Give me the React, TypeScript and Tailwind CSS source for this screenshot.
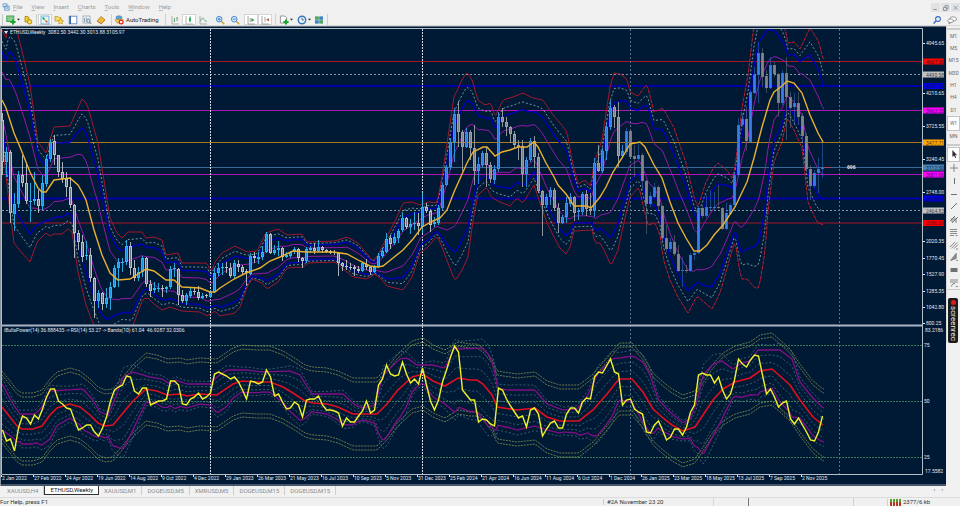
import React from "react";
import clsx from "clsx";

type Point = [number, number];

/* top, bottom, high, low, direction (1 = up) */
type Candle = [number, number, number, number, number];

const candles: Candle[] = [
	[120,162,113,175,0],[152,162,147,177,1],[152,213,150,223,0],[204,214,193,231,1],[175,204,171,208,1],
	[175,183,155,187,0],[183,201,162,204,0],[201,202,183,222,1],[199,201,172,205,1],[199,206,190,213,0],
	[183,206,175,210,1],[159,184,155,187,1],[142,159,139,162,1],[141,155,135,165,0],[155,172,155,177,0],
	[172,179,162,183,0],[179,187,172,197,0],[187,205,177,208,0],[205,233,204,258,0],[233,242,230,250,0],
	[242,257,235,262,0],[255,256,241,260,1],[255,278,248,282,0],[278,301,277,318,0],[293,301,290,308,1],
	[293,304,292,310,0],[298,304,288,308,1],[287,298,282,310,1],[268,287,265,288,1],[262,268,258,287,1],
	[262,263,258,272,1],[246,262,240,265,1],[246,268,242,275,0],[268,278,260,281,0],[272,278,267,281,1],
	[258,272,256,277,1],[258,284,257,287,0],[284,291,280,297,0],[288,290,282,293,1],[288,289,283,292,1],
	[288,289,285,297,0],[287,289,286,293,1],[269,287,266,289,1],[268,269,263,277,1],[269,295,268,305,0],
	[295,301,290,303,0],[295,301,293,305,1],[291,296,288,298,1],[291,292,288,295,0],[292,298,286,300,0],
	[296,298,293,299,1],[295,296,294,298,0],[292,297,290,298,1],[273,292,268,293,1],[268,273,263,276,1],
	[267,268,263,275,1],[267,268,262,273,0],[268,276,263,278,0],[263,276,260,278,1],[264,267,260,272,0],
	[267,272,265,275,0],[271,273,269,286,0],[256,274,253,275,1],[256,258,252,263,0],[257,259,252,264,1],
	[252,257,246,260,1],[234,252,232,253,1],[234,253,233,254,0],[250,253,245,255,1],[248,250,241,256,1],
	[248,257,247,261,0],[255,257,252,258,1],[252,256,251,258,1],[249,252,247,254,1],[249,258,248,262,0],
	[258,261,257,268,0],[249,261,247,263,1],[248,250,246,253,1],[248,251,243,254,0],[247,251,240,252,1],
	[247,250,246,253,0],[250,252,249,253,0],[251,253,250,254,0],[252,253,250,255,0],[253,263,252,276,0],
	[263,266,262,271,0],[266,267,260,270,0],[267,268,263,270,0],[267,269,265,276,0],[269,271,266,273,0],
	[263,271,262,272,1],[264,267,259,270,0],[267,272,266,275,0],[267,272,265,273,1],[256,267,253,268,1],
	[251,256,248,258,1],[239,252,233,253,1],[238,244,235,249,0],[237,243,233,245,1],[231,238,229,243,1],
	[218,230,213,232,1],[218,227,217,229,0],[224,227,219,234,1],[223,224,212,230,1],[223,226,213,235,0],
	[207,227,193,233,1],[207,211,203,213,0],[211,225,209,232,0],[222,224,217,227,1],[208,223,205,225,1],
	[185,208,183,210,1],[167,185,165,186,1],[142,167,138,170,1],[114,142,108,162,1],[114,132,101,147,0],
	[132,147,130,171,0],[132,147,128,148,1],[132,148,130,160,0],[148,171,125,185,0],[164,171,157,184,1],
	[153,165,151,167,1],[153,165,147,187,0],[165,179,162,183,0],[169,180,165,184,1],[117,169,112,172,1],
	[117,122,108,127,0],[122,127,117,136,0],[127,134,126,143,0],[134,145,131,148,0],[145,147,140,160,0],
	[146,174,140,187,0],[160,174,157,187,1],[141,160,138,162,1],[141,157,136,168,0],[157,191,153,193,0],
	[191,205,190,236,0],[197,205,194,208,1],[190,197,187,205,1],[190,208,188,210,0],[208,223,203,233,0],
	[217,223,215,224,1],[203,217,197,223,1],[197,204,193,207,1],[197,213,196,221,0],[211,212,208,220,1],
	[194,212,192,215,1],[194,209,190,216,0],[209,211,193,215,0],[163,211,158,217,1],[163,171,145,172,0],
	[151,171,148,173,1],[127,151,123,160,1],[108,127,100,130,1],[107,117,105,128,0],[117,156,102,167,0],
	[151,156,145,157,1],[131,152,128,155,1],[131,157,130,159,0],[156,159,145,177,0],[155,159,142,160,1],
	[155,181,153,190,0],[181,204,180,234,0],[196,204,192,207,1],[187,197,183,198,1],[187,206,185,210,0],
	[206,238,205,241,0],[238,249,225,252,0],[242,249,238,252,1],[242,254,235,256,0],[254,271,245,272,0],
	[270,271,257,287,1],[270,271,265,273,0],[255,271,253,272,1],[253,255,252,260,1],[208,253,206,254,1],
	[208,216,205,218,0],[207,216,195,218,1],[207,208,190,210,1],[207,208,192,210,1],[207,208,185,209,0],
	[208,229,207,230,0],[213,229,203,230,1],[205,214,203,215,1],[175,205,172,207,1],[125,175,118,177,1],
	[119,125,113,127,1],[119,141,107,151,0],[92,142,90,143,1],[75,93,67,94,1],[53,75,42,103,1],
	[53,77,48,87,0],[76,88,70,93,0],[65,88,57,89,1],[65,74,62,77,0],[74,103,73,117,0],
	[73,103,70,105,1],[73,97,57,140,0],[97,108,92,128,0],[103,107,93,125,1],[103,117,92,125,0],
	[116,136,113,142,0],[136,169,133,172,0],[169,186,165,200,0],[173,186,170,188,1],[169,173,158,193,1],
	[167,169,143,178,1],
];

const middle: Point[] = [
	[2,100],[6,108],[14,133],[20,147],[30,172],[38,188],[42,192],[46,192],[54,180],[70,178],[78,185],[82,192],
	[86,200],[94,230],[102,255],[110,273],[118,280],[130,279],[138,274],[146,269],[154,271],[166,280],[174,280],
	[182,287],[200,288],[210,292],[215,292],[220,288],[234,279],[246,273],[260,268],[270,261],[280,257],[293,251],
	[307,252],[333,252],[347,254],[360,261],[370,266],[378,267],[383,266],[393,258],[403,250],[413,239],[422,227],
	[433,221],[440,218],[447,210],[454,192],[467,163],[473,152],[483,147],[487,147],[495,156],[502,152],[510,150],
	[518,147],[527,147],[534,142],[538,147],[546,163],[554,177],[558,185],[566,194],[574,206],[587,206],[591,208],
	[600,197],[606,187],[613,172],[622,158],[630,144],[640,142],[645,147],[654,165],[662,178],[670,202],[678,223],
	[686,238],[694,251],[700,251],[707,245],[714,235],[723,225],[735,207],[747,182],[754,158],[762,127],[770,100],
	[774,92],[782,86],[787,81],[794,83],[802,93],[810,115],[818,133],[823,142],
];

const upper: Point[] = [
	[2,30],[6,38],[9,20],[15,23],[23,55],[30,85],[38,142],[46,153],[54,127],[70,126],[82,99],[87,104],[98,143],
	[110,218],[117,233],[122,238],[128,232],[142,232],[146,238],[154,237],[162,240],[166,255],[178,253],[182,263],
	[207,263],[211,272],[215,262],[222,253],[235,246],[247,252],[257,251],[266,233],[278,229],[287,235],[302,234],
	[307,242],[335,241],[347,237],[358,243],[373,261],[378,255],[387,237],[397,217],[403,203],[412,202],[420,205],
	[428,202],[437,203],[441,183],[446,150],[454,97],[462,80],[467,72],[472,80],[478,100],[485,105],[491,103],
	[495,117],[503,100],[513,97],[523,93],[533,98],[543,100],[553,115],[560,123],[567,132],[572,160],[578,184],
	[585,180],[591,187],[594,163],[602,140],[610,87],[614,73],[620,74],[627,79],[630,92],[638,96],[647,84],
	[654,112],[663,108],[674,128],[686,163],[694,197],[698,207],[706,182],[714,167],[718,163],[727,170],[732,178],
	[735,168],[738,142],[742,108],[748,75],[754,25],[759,-2],[768,-5],[777,8],[785,28],[788,43],[794,42],[800,49],
	[810,28],[819,42],[823,60],
];

const lower: Point[] = [
	[2,142],[6,175],[10,212],[14,243],[22,253],[30,262],[37,242],[46,233],[50,236],[54,234],[62,234],[68,229],
	[72,232],[78,272],[86,305],[93,323],[100,340],[106,344],[115,332],[122,327],[132,328],[138,312],[143,299],
	[148,298],[154,304],[162,310],[170,307],[182,311],[200,312],[207,316],[215,311],[220,316],[235,313],[240,307],
	[247,287],[252,279],[262,283],[267,289],[278,282],[287,268],[303,267],[308,263],[335,262],[342,268],[353,277],
	[367,279],[375,274],[382,280],[387,286],[403,290],[412,277],[420,253],[428,247],[437,236],[442,247],[448,263],
	[455,281],[462,270],[468,257],[473,220],[478,195],[487,187],[491,197],[500,202],[510,206],[517,198],[523,203],
	[534,185],[540,203],[547,223],[554,237],[560,248],[566,254],[570,247],[574,231],[592,230],[595,243],[600,243],
	[605,252],[611,266],[618,250],[623,227],[630,197],[639,187],[643,205],[648,225],[655,223],[660,235],[663,258],
	[670,280],[678,297],[688,313],[697,296],[712,309],[720,293],[728,265],[735,240],[739,268],[742,279],[747,279],
	[755,288],[759,288],[765,252],[768,212],[774,162],[782,142],[787,117],[794,130],[802,148],[808,202],[817,222],
	[823,225],
];

const rsi: number[] = [
	430,441,439,451,428,416,418,424,415,419,409,397,389,389,401,404,408,409,420,430,428,425,425,432,436,428,417,401,
	390,387,385,376,377,391,394,388,388,405,403,401,401,399,381,381,385,404,405,399,397,393,399,397,393,374,372,374,
	376,379,377,382,390,399,381,382,384,382,370,377,396,394,402,409,408,402,405,417,400,399,399,396,405,410,410,411,
	413,426,418,422,422,416,411,401,413,410,385,379,365,374,376,375,362,374,383,379,384,368,385,401,410,400,382,370,
	357,346,352,390,395,400,400,422,419,420,424,426,388,390,399,406,412,418,416,427,410,408,414,436,429,423,421,428,
	428,414,408,408,413,402,398,399,377,372,373,366,359,372,374,405,400,399,409,412,414,432,433,425,421,430,440,437,
	429,429,435,427,412,405,375,373,375,375,383,377,390,399,394,380,359,364,367,360,355,356,375,394,389,397,407,403,
	401,419,424,418,425,432,440,441,432,416,
];

const rsiMiddle: Point[] = [
	[2,407],[10,417],[17,426],[22,429],[33,429],[42,426],[50,415],[57,408],[70,404],[80,407],[90,415],[98,423],
	[105,426],[113,425],[123,413],[133,401],[146,389],[157,391],[167,395],[180,394],[187,396],[200,394],[217,395],
	[233,384],[242,381],[257,382],[270,382],[283,387],[293,393],[305,401],[313,403],[327,404],[338,407],[353,414],
	[377,414],[387,404],[397,391],[412,377],[423,374],[433,381],[445,386],[458,378],[470,380],[477,380],[483,384],
	[492,395],[497,407],[517,410],[535,408],[547,417],[560,421],[579,421],[593,410],[607,394],[619,379],[632,379],
	[643,392],[653,409],[663,418],[672,425],[683,431],[695,427],[703,415],[713,400],[723,389],[735,382],[750,378],
	[760,371],[772,369],[780,376],[790,385],[800,400],[813,417],[823,425],
];

const rsiUpper: Point[] = [
	[2,384],[13,404],[20,414],[35,414],[42,407],[50,391],[83,389],[92,399],[100,412],[108,415],[115,399],[123,377],
	[133,372],[150,377],[162,379],[170,384],[175,380],[187,384],[210,384],[217,377],[227,370],[247,370],[263,372],
	[290,371],[300,375],[306,385],[312,394],[343,394],[355,405],[363,408],[375,405],[383,375],[400,359],[407,358],
	[417,365],[433,365],[445,368],[455,347],[460,349],[482,348],[488,354],[493,365],[498,389],[510,390],[535,390],
	[547,404],[563,410],[577,409],[588,395],[597,375],[612,359],[633,356],[643,362],[650,375],[658,399],[670,412],
	[683,423],[690,419],[697,402],[703,375],[713,364],[722,361],[733,369],[742,363],[750,361],[758,350],[780,350],
	[792,359],[800,382],[812,397],[823,408],
];

const valueAt = (line: Point[], x: number) => {
	for (let i = 1; i < line.length; i++) {
		const [x0, y0] = line[i - 1];
		const [x1, y1] = line[i];
		if (x <= x1) return y0 + ((y1 - y0) * (x - x0)) / (x1 - x0);
	}
	return line[line.length - 1][1];
};

const steps = Array.from({ length: 412 }, (_, i) => 2 + i * 2);

const toPath = (points: Point[]) =>
	points.map(([x, y], i) => `${i ? "L" : "M"}${x} ${y.toFixed(1)}`).join("");

const band = (edge: Point[], ratio: number, from = 0, to = 830) =>
	toPath(
		steps
			.filter((x) => x >= from && x <= to)
			.map((x) => {
				const mid = valueAt(middle, x);
				return [x, mid + (valueAt(edge, x) - mid) * ratio] as Point;
			})
	);

const rsiBand = (ratio: number, offset = 0) =>
	toPath(
		steps.map((x) => {
			const mid = valueAt(rsiMiddle, x);
			return [x, mid + (valueAt(rsiUpper, x) - mid) * ratio + offset] as Point;
		})
	);

const levels = [
	{ y: 61.5, color: "#a8142a", tag: "#ff0000", label: "4667.30" },
	{ y: 74.5, color: "#8a98a4", tag: "#c0c0c0", label: "4490.58", dash: "2 2" },
	{ y: 86, color: "#0000a8", tag: "#0000e0", label: "4307.22", thick: true },
	{ y: 110.5, color: "#b014b8", tag: "#ff00ff", label: "3963.33" },
	{ y: 142.5, color: "#a87a20", tag: "#ffa500", label: "3477.71" },
	{ y: 167.5, color: "#3a6a98", tag: "#4682b4", label: "3112.50" },
	{ y: 174.5, color: "#b014b8", tag: "#ff00ff", label: "3001.06" },
	{ y: 198.5, color: "#0000a8", tag: "#0000e0", label: "2640.95", thick: true },
	{ y: 210.5, color: "#8a98a4", tag: "#c0c0c0", label: "2464.83", dash: "2 2" },
	{ y: 223, color: "#a8142a", tag: "#ff0000", label: "2286.09" },
];

const priceTicks: [string, number][] = [
	["4945.65", 43],["4210.65", 93],["3725.55", 126],["3240.45", 159],["2748.00", 192],["2020.35", 241],
	["1770.45", 258],["1527.90", 274],["1285.35", 291],["1042.80", 307],["800.25", 323],
];

const dates = [
	"2 Jan 2022","27 Feb 2022","24 Apr 2022","19 Jun 2022","14 Aug 2022","9 Oct 2022","4 Dec 2022","29 Jan 2023",
	"26 Mar 2023","21 May 2023","16 Jul 2023","10 Sep 2023","5 Nov 2023","31 Dec 2023","25 Feb 2024","21 Apr 2024",
	"16 Jun 2024","11 Aug 2024","6 Oct 2024","1 Dec 2024","26 Jan 2025","23 Mar 2025","18 May 2025","13 Jul 2025",
	"7 Sep 2025","2 Nov 2025",
];

const candleColors = (i: number, up: boolean) => {
	if (i < 110) return up ? ["#1590e0", "#2cb8ea"] : ["#6d7680", "#bcc4c8"];
	if (i < 156) return up ? ["#2a78e0", "#3498e4"] : ["#7c8288", "#9ca2a6"];
	return up ? ["#3a80e8", "#2f74cc"] : ["#80858a", "#767b80"];
};

const Chart = () => (
	<svg
		viewBox="0 26 946 460"
		className="block w-full min-w-0 flex-1 bg-[#001a36]"
		fontFamily="Roboto, 'Liberation Sans', sans-serif"
		fontSize="5"
		fill="none"
		role="img"
		aria-label="ETHUSD weekly price chart">
		<defs>
			<clipPath id="pricePane">
				<rect x="2" y="29" width="920" height="296" />
			</clipPath>
		</defs>

		{/* price levels */}
		{levels.map((l) => (
			<line
				key={l.y}
				x1="2"
				x2="922"
				y1={l.y}
				y2={l.y}
				stroke={l.color}
				strokeWidth={l.thick ? 2 : 1}
				strokeDasharray={l.dash}
			/>
		))}
		{[345.5, 401.5, 457.5].map((y) => (
			<line key={y} x1="2" x2="922" y1={y} y2={y} stroke="#3a7a54" strokeDasharray="2 1" />
		))}

		{/* year and quarter separators */}
		{[210.5, 422.5].map((x) => (
			<line key={x} x1={x} x2={x} y1="29" y2="474" stroke="#d4dce2" strokeDasharray="2 1" />
		))}
		{[630.5, 839.5].map((x) => (
			<line key={x} x1={x} x2={x} y1="29" y2="474" stroke="#56728a" strokeDasharray="2 2" />
		))}

		<g clipPath="url(#pricePane)">
			{[upper, lower].map((edge, i) => (
				<g key={i}>
					<path d={band(edge, 1, 0, 640)} stroke="#a0182c" />
					<path d={band(edge, 1, 640)} stroke="#c01c30" strokeDasharray="4 1" />
					<path d={band(edge, 0.84)} stroke="#8fb4b4" strokeDasharray="2 2" strokeWidth="0.8" />
					<path d={band(edge, 0.69)} stroke="#0000b4" strokeWidth="1.5" />
					<path d={band(edge, 0.4)} stroke="#9418a8" />
				</g>
			))}
			{candles.map(([top, bottom, high, low, dir], i) => {
				const x = 2 + i * 4;
				const [fill, edge] = candleColors(i, dir === 1);
				return (
					<g key={i}>
						<line x1={x + 0.5} x2={x + 0.5} y1={high} y2={low} stroke={edge} strokeOpacity={i < 156 ? 0.9 : 0.5} />
						<rect x={x - 1} y={top} width="3" height={Math.max(1, bottom - top)} fill={edge} />
						{bottom - top > 2 && (
							<rect x={x} y={top + 1} width="1" height={bottom - top - 2} fill={fill} />
						)}
					</g>
				);
			})}
			<path d={toPath(middle)} stroke="#eab030" strokeWidth="1.4" />
			<line x1="823" x2="831" y1="167.5" y2="167.5" stroke="#a04858" />
		</g>

		{/* indicator pane */}
		{[36, 32, -32, -36].map((offset) => (
			<path key={offset} d={rsiBand(0, offset)} stroke="#85904c" strokeDasharray="2 1" strokeWidth="0.8" />
		))}
		{[1.26, 0.74, 0.35, -0.35, -0.74, -1.26].map((ratio) => (
			<path key={ratio} d={rsiBand(ratio)} stroke="#4c7888" strokeDasharray="2 2" strokeWidth="0.7" />
		))}
		<path d={rsiBand(1)} stroke="#801088" strokeWidth="1.3" />
		<path d={rsiBand(-1)} stroke="#801088" strokeWidth="1.3" />
		<path d={toPath(rsiMiddle)} stroke="#e01020" strokeWidth="1.6" />
		<path d={toPath(rsi.map((y, i) => [2.5 + i * 4, y] as Point))} stroke="#f0f028" strokeWidth="1.4" />

		{/* frame */}
		<path d="M0 26.5H946" stroke="#607080" />
		<path d="M1.5 474V28.5H922.5V474.5H1.5" stroke="#b4bec8" />
		<path d="M1 325.5H922" stroke="#a8b4c4" strokeWidth="2" />
		<path d="M0.5 26V486M0 485H946" stroke="#8a929c" />

		<g fill="#e4e8ec">
			<path d="M4 31h4l-2 3z" />
			<text x="10" y="34">ETHUSD,Weekly</text>
			<text x="48" y="34">3082.50 3442.30 3013.88 3105.97</text>
			<text x="4" y="332">
				iBullsPower(14) 36.888435 -&gt; RSI(14) 53.27 -&gt; Bands(10) 61.04 &nbsp;46.9287 32.0306
			</text>
			<text x="847" y="169" fontWeight="bold">696</text>
			{priceTicks.map(([label, y]) => (
				<g key={label}>
					<rect x="923" y={y} width="2" height="1" />
					<text x="926" y={y + 2}>{label}</text>
				</g>
			))}
			<text x="925" y="332">83.2186</text>
			<text x="924" y="347">75</text>
			<text x="924" y="403">50</text>
			<text x="924" y="459">25</text>
			<text x="925" y="473">17.5582</text>
			{dates.map((date, i) => (
				<g key={date}>
					<rect x={1 + i * 32} y="475" width="1" height="2" />
					<text x={2 + i * 32} y="480">{date}</text>
				</g>
			))}
		</g>
		{levels.map((l) => (
			<g key={l.y}>
				<rect x="923" y={l.y - 3} width="21" height="6" fill={l.tag} />
				<text x="926" y={l.y + 2} fill="#10182c" fillOpacity="0.8">
					{l.label}
				</text>
			</g>
		))}
	</svg>
);

const Icon = ({ children }: { children: React.ReactNode }) => (
	<svg viewBox="0 0 10 10" className="size-[10px] shrink-0" fill="none" aria-hidden="true">
		{children}
	</svg>
);

const Sep = ({ wide = true }: { wide?: boolean }) => (
	<div className={clsx("flex h-full shrink-0 justify-center", wide ? "w-[6px]" : "w-[4px]")}>
		<div className="w-px bg-[#cfcfcf]" />
	</div>
);

type ToolProps = {
	label: string;
	className?: string;
	boxed?: boolean;
	caret?: boolean;
	children: React.ReactNode;
};

const Tool = ({ label, className = "w-[14px]", boxed, caret, children }: ToolProps) => (
	<button
		aria-label={label}
		className={clsx(
			"flex h-full shrink-0 items-center justify-center gap-px",
			className,
			boxed && "border border-[#d4d4d4] bg-white"
		)}>
		<Icon>{children}</Icon>
		{caret && (
			<svg viewBox="0 0 4 4" className="size-[3px] shrink-0" aria-hidden="true">
				<path d="M0 1h4L2 3.4z" fill="#222" />
			</svg>
		)}
	</button>
);

const Glass = ({ minus }: { minus?: boolean }) => (
	<>
		<path d="M6.3 6.3L9.3 9.3" stroke="#d0a030" strokeWidth="1.6" />
		<circle cx="4.2" cy="4.2" r="2.8" fill="#d8ecfc" stroke="#4088cc" strokeWidth="1" />
		<path d={minus ? "M2.8 4.2h2.8" : "M2.8 4.2h2.8M4.2 2.8v2.8"} stroke="#3070b8" strokeWidth="0.9" />
	</>
);

const Plus = () => <path d="M7 4.4v5.2M4.4 7h5.2" stroke="#18a828" strokeWidth="2" />;

const Toolbar = () => (
	<div className="flex h-3 shrink-0 items-center border-b border-[#d8d8d8] pl-[2px]">
		<Tool label="New chart" className="w-[20px] border-l border-[#c8c8c8]" caret>
			<rect x="0.8" y="1" width="7" height="5.5" fill="#88cc90" stroke="#48a058" />
			<Plus />
		</Tool>
		<Tool label="Profiles" className="w-[12px]">
			<path d="M2 1.5h3l1 1.5v4H2z" fill="#f0c828" stroke="#a88410" strokeWidth="0.8" />
			<circle cx="6.6" cy="6.8" r="2.2" fill="#f4dc58" stroke="#a88410" strokeWidth="0.9" />
		</Tool>
		<Sep wide={false} />
		<Tool label="Market watch" boxed>
			<rect x="1" y="1" width="8" height="8" fill="#e4f4fc" stroke="#58a8d0" strokeWidth="0.8" />
			<path d="M2.6 2.6l2 2" stroke="#28a050" strokeWidth="1.6" />
			<path d="M5.4 5.4l2 2" stroke="#e07030" strokeWidth="1.6" />
		</Tool>
		<Tool label="Navigator">
			<path d="M1 1.5h3l1 1h2v3.5H1z" fill="#f8d868" stroke="#c09828" strokeWidth="0.8" />
			<path d="M6.6 3.6l.9 1.8 2 .3-1.5 1.3.4 2-1.8-1-1.8 1 .4-2-1.4-1.3 1.9-.3z" fill="#fce048" stroke="#b88818" strokeWidth="0.6" />
		</Tool>
		<Tool label="Terminal">
			<rect x="1.2" y="1.2" width="7.6" height="7.6" fill="#fff" stroke="#6088c0" strokeWidth="0.9" />
			<path d="M2.2 1v8" stroke="#3868b0" strokeWidth="1.6" />
		</Tool>
		<Tool label="Strategy tester">
			<rect x="1" y="1" width="7" height="7" fill="#f4f8fc" stroke="#8898a8" strokeWidth="0.7" />
			<path d="M2.5 3v4M4.2 2v5M6 3v4" stroke="#7890a8" strokeWidth="0.8" />
			<circle cx="6.4" cy="6" r="1.6" fill="#d4e8f4" stroke="#607888" strokeWidth="0.7" />
			<path d="M7.5 7.2L9.3 9" stroke="#607888" />
		</Tool>
		<Tool label="Metaeditor">
			<path d="M1 6l4-4.6 4 3.4-3.6 4z" fill="#f0b838" stroke="#b88028" strokeWidth="0.8" />
			<path d="M1 6.2l4.3 2.6L9 5" stroke="#c06828" strokeWidth="0.7" />
		</Tool>
		<Sep />
		<button className="flex h-full w-[48px] shrink-0 items-center gap-[2px] text-[6px] leading-none whitespace-nowrap text-[#222]">
			<Icon>
				<ellipse cx="5" cy="2.6" rx="3" ry="1.8" fill="#58a8d8" stroke="#3878a8" strokeWidth="0.6" />
				<path d="M1 4.4h8L7 8H3z" fill="#f0c048" stroke="#b08828" strokeWidth="0.6" />
				<circle cx="7.2" cy="7" r="2.5" fill="#e02818" />
				<rect x="6.1" y="5.9" width="2.2" height="2.2" fill="#fff" />
			</Icon>
			AutoTrading
		</button>
		<Sep />
		<Tool label="Bar chart">
			<path d="M2 1v8h7" stroke="#a0a0a0" strokeWidth="0.8" />
			<path d="M4.5 3v4M3.6 6h1M7 2v4M7 3h1" stroke="#58a070" strokeWidth="0.9" />
		</Tool>
		<Tool label="Candlesticks" boxed>
			<path d="M2 1v8h7" stroke="#a0a0a0" strokeWidth="0.8" />
			<path d="M6 1.4v6" stroke="#209048" strokeWidth="0.8" />
			<rect x="5" y="2.6" width="2" height="3.6" fill="#28b858" />
		</Tool>
		<Tool label="Line chart">
			<path d="M2 1v8h7" stroke="#a0a0a0" strokeWidth="0.8" />
			<path d="M2.4 6.4c1.4-4 2.6-4 3.6-2s2 1.6 3 2" stroke="#58a070" strokeWidth="0.9" />
		</Tool>
		<div className="flex h-full shrink-0 px-[2px]">
			<Tool label="Zoom in" className="w-[15px]"><Glass /></Tool>
			<Tool label="Zoom out" className="w-[15px]"><Glass minus /></Tool>
		</div>
		<Tool label="Auto scroll" boxed>
			<path d="M2 1v8h7M4.2 3v4" stroke="#909090" strokeWidth="0.8" />
			<path d="M5.4 3l3 2-3 2z" fill="#28a048" />
		</Tool>
		<Tool label="Chart shift" boxed>
			<path d="M2 1v8h7M5 2v5" stroke="#909090" strokeWidth="0.8" />
			<path d="M9 3L6 4.8l3 1.8z" fill="#c86848" />
		</Tool>
		<Sep />
		<Tool label="Indicators" className="w-[16px]" caret>
			<path d="M1.4 1h4.4l1.8 1.8V8H1.4z" fill="#fff" stroke="#808080" strokeWidth="0.8" />
			<Plus />
		</Tool>
		<Tool label="Periods" className="w-[19px]" caret>
			<circle cx="5" cy="5" r="3.7" fill="#eef6fc" stroke="#3878b8" strokeWidth="1.5" />
			<path d="M5 2.8V5h2" stroke="#284870" strokeWidth="0.8" />
		</Tool>
		<Tool label="Templates" className="w-[12px]">
			<rect x="1" y="1.4" width="3.8" height="3.4" fill="#48a860" />
			<rect x="5.2" y="1.4" width="3.8" height="3.4" fill="#4080c0" />
			<rect x="1" y="5.2" width="3.8" height="3.4" fill="#4080c0" />
			<rect x="5.2" y="5.2" width="3.8" height="3.4" fill="#48a860" />
		</Tool>
		<Sep wide={false} />
		<div className="ml-auto flex h-full gap-[3px] pr-[2px]">
			<Tool label="Search" className="w-[12px]">
				<circle cx="6" cy="4" r="2.4" stroke="#3868c8" strokeWidth="1.1" />
				<path d="M4.2 5.8L1.6 8.6" stroke="#3868c8" strokeWidth="1.4" />
			</Tool>
			<Tool label="Chat" className="w-[12px]">
				<ellipse cx="6.2" cy="4" rx="3.4" ry="2.2" fill="#fff" stroke="#808080" strokeWidth="0.8" />
				<ellipse cx="3.6" cy="5.8" rx="2.8" ry="1.8" fill="#fff" stroke="#808080" strokeWidth="0.8" />
				<path d="M2.4 7.2L2 9l1.8-1.4" stroke="#808080" strokeWidth="0.8" />
			</Tool>
		</div>
	</div>
);

const MenuBar = () => (
	<div className="flex h-[14px] shrink-0 items-center text-[6px] leading-none text-[#9a9a9a]">
		<svg viewBox="0 0 8 8" className="ml-[2px] size-2" fill="none" aria-hidden="true">
			<path d="M1 .8h4v3H1zM2.6 3h4.6v4.2H2.6z" fill="#e8f2fa" stroke="#5890c0" strokeWidth="0.8" />
			<path d="M4 6V4.6M5.8 6V4" stroke="#5890c0" strokeWidth="0.8" />
		</svg>
		<nav className="ml-[3px] flex gap-[9px]">
			{["File", "View", "Insert", "Charts", "Tools", "Window", "Help"].map((item) => (
				<button key={item}>
					<span className="underline decoration-[#b8b8b8] decoration-1 underline-offset-1">{item[0]}</span>
					{item.slice(1)}
				</button>
			))}
		</nav>
		<div className="ml-auto flex gap-px">
			{[
				["Minimize", "M2.4 6.5h3.4"],
				["Restore", "M2.5 4.5h3v3h-3zM4 4V2.6h3V6H5.8"],
				["Close", "M2.6 2.8l4 4M6.6 2.8l-4 4"],
			].map(([label, d]) => (
				<button key={label} aria-label={label} className="size-[9px] bg-[#e2e2e4]">
					<svg viewBox="0 0 9 9" className="size-full" fill="none" aria-hidden="true">
						<path d={d} stroke="#8490a0" strokeWidth="0.9" />
					</svg>
				</button>
			))}
		</div>
	</div>
);

const drawTools: [string, React.ReactNode][] = [
	["Cursor", <path d="M3.4 1v7l1.7-1.4 1 2.4 1-.5-1-2.3h2z" fill="#303030" />],
	["Crosshair", <path d="M5 1v8M1 5h8" stroke="#707070" strokeWidth="0.8" />],
	["Vertical line", <path d="M5.5 2v6" stroke="#707070" />],
	["Horizontal line", <path d="M2 5.5h6" stroke="#707070" />],
	["Trendline", <path d="M2 8l6-6" stroke="#606060" strokeWidth="0.9" />],
	["Equidistant channel", <path d="M1 7l5-5M3 9l6-6M3 4v4M5 3v4M7 4v5" stroke="#606060" strokeWidth="0.8" />],
	["Fibonacci", <path d="M1 2.5h7M1 4.5h7M1 6.5h7M1 8.5h4M6.5 8.5h2" stroke="#707070" strokeWidth="0.8" />],
	["Andrews pitchfork", <path d="M1 7l5-5M2.4 8.4l6-6M5 8.6l4-4M7 9h2" stroke="#707070" strokeWidth="0.8" />],
	["Arrow", <path d="M1.6 8.4l5.6-7v5zM7 8.4h2" fill="#909090" stroke="#707070" strokeWidth="0.8" />],
	["Rectangle", <rect x="1.5" y="3" width="7" height="4" rx="0.6" fill="#707070" />],
	["Shapes", <path d="M1 2h8M1 4h8M2 8.6l2-3h2M6.8 8.5h2" stroke="#707070" strokeWidth="0.8" />],
];

const Sidebar = () => (
	<aside className="flex w-[14px] shrink-0 flex-col border-l border-[#d8d8d8] pt-[2px] text-[5px] leading-none text-[#666]">
		<div className="flex h-[115px] flex-col border-t-2 border-[#cccccc]">
			{["M1", "M5", "M15", "M30", "H1", "H4", "D1", "W1", "MN"].map((frame) => (
				<button
					key={frame}
					className={clsx(
						"flex-1 overflow-hidden text-center",
						frame === "W1" && "border border-[#c4c4c4] bg-white"
					)}>
					{frame}
				</button>
			))}
		</div>
		<div className="mt-px flex h-[146px] flex-col border-t-2 border-b border-[#cccccc] pt-px">
			{drawTools.map(([label, shape]) => (
				<button
					key={label}
					aria-label={label}
					className={clsx(
						"flex flex-1 items-center justify-center",
						label === "Cursor" && "border border-[#c4c4c4] bg-white"
					)}>
					<Icon>{shape}</Icon>
				</button>
			))}
		</div>
		<div className="mt-2 ml-px flex w-[10px] flex-col items-center gap-px rounded-[2px] bg-[#1c1c1c] py-[2px] text-[8px] text-[#e8e8e8]">
			<span className="size-[5px] shrink-0 rounded-full bg-[#e01818]" />
			<span className="leading-[10px] [writing-mode:vertical-rl]">screenrec</span>
		</div>
	</aside>
);

const tabs = ["XAUUSD,H4", "ETHUSD,Weekly", "XAUUSD,M1", "DOGEUSD,M5", "XMRUSD,M5", "DOGEUSD,M15", "DOGEUSD,M15"];

const Tabs = () => (
	<div className="flex h-[11px] shrink-0 items-start bg-[#f1f1f1] text-[6px] leading-none text-[#8c8c8c]">
		{tabs.map((tab, i) => (
			<button
				key={i}
				className={clsx(
					"h-[9px] border-r px-[5px] whitespace-nowrap",
					i === 0 && "pl-[7px]",
					i === 1 ? "border-b border-l border-[#333] bg-white text-[#222]" : "border-[#cfcfcf]"
				)}>
				{tab}
			</button>
		))}
		<div className="ml-auto flex gap-[6px] pr-[17px] text-[#555]">
			<button aria-label="Scroll left">‹</button>
			<button aria-label="Scroll right">›</button>
		</div>
	</div>
);

const StatusBar = () => (
	<footer className="flex h-[9px] shrink-0 items-center border-t border-[#dcdcdc] text-[6px] leading-none whitespace-nowrap text-[#333]">
		<span className="flex-1">For Help, press F1</span>
		<span className="w-[110px] border-l border-[#cccccc] pl-[3px]">#2A November 23 20</span>
		<span className="h-full w-[35px] border-l border-[#d8d8d8]" />
		<span className="h-full w-[105px] border-l border-[#777]" />
		<span className="h-full w-[34px] border-l border-[#d0d0d0]" />
		<span className="flex w-[73px] items-center gap-[2px] border-l border-[#d0d0d0] pl-[2px]">
			<svg viewBox="0 0 11 7" className="h-[7px] w-[11px]" aria-hidden="true">
				{[0, 3, 6, 9].map((x) => (
					<g key={x}>
						<rect x={x} y="0" width="2" height="3" fill="#58a028" />
						<rect x={x} y="3" width="2" height="4" fill="#b83828" />
					</g>
				))}
			</svg>
			2377/6 kb
		</span>
	</footer>
);

export default function App() {
	return (
		<div className="flex min-h-screen flex-col bg-[#f0f0f0] font-[Roboto,'Liberation_Sans',sans-serif]">
			<MenuBar />
			<Toolbar />
			<main className="flex items-start">
				<Chart />
				<Sidebar />
			</main>
			<Tabs />
			<StatusBar />
		</div>
	);
}
